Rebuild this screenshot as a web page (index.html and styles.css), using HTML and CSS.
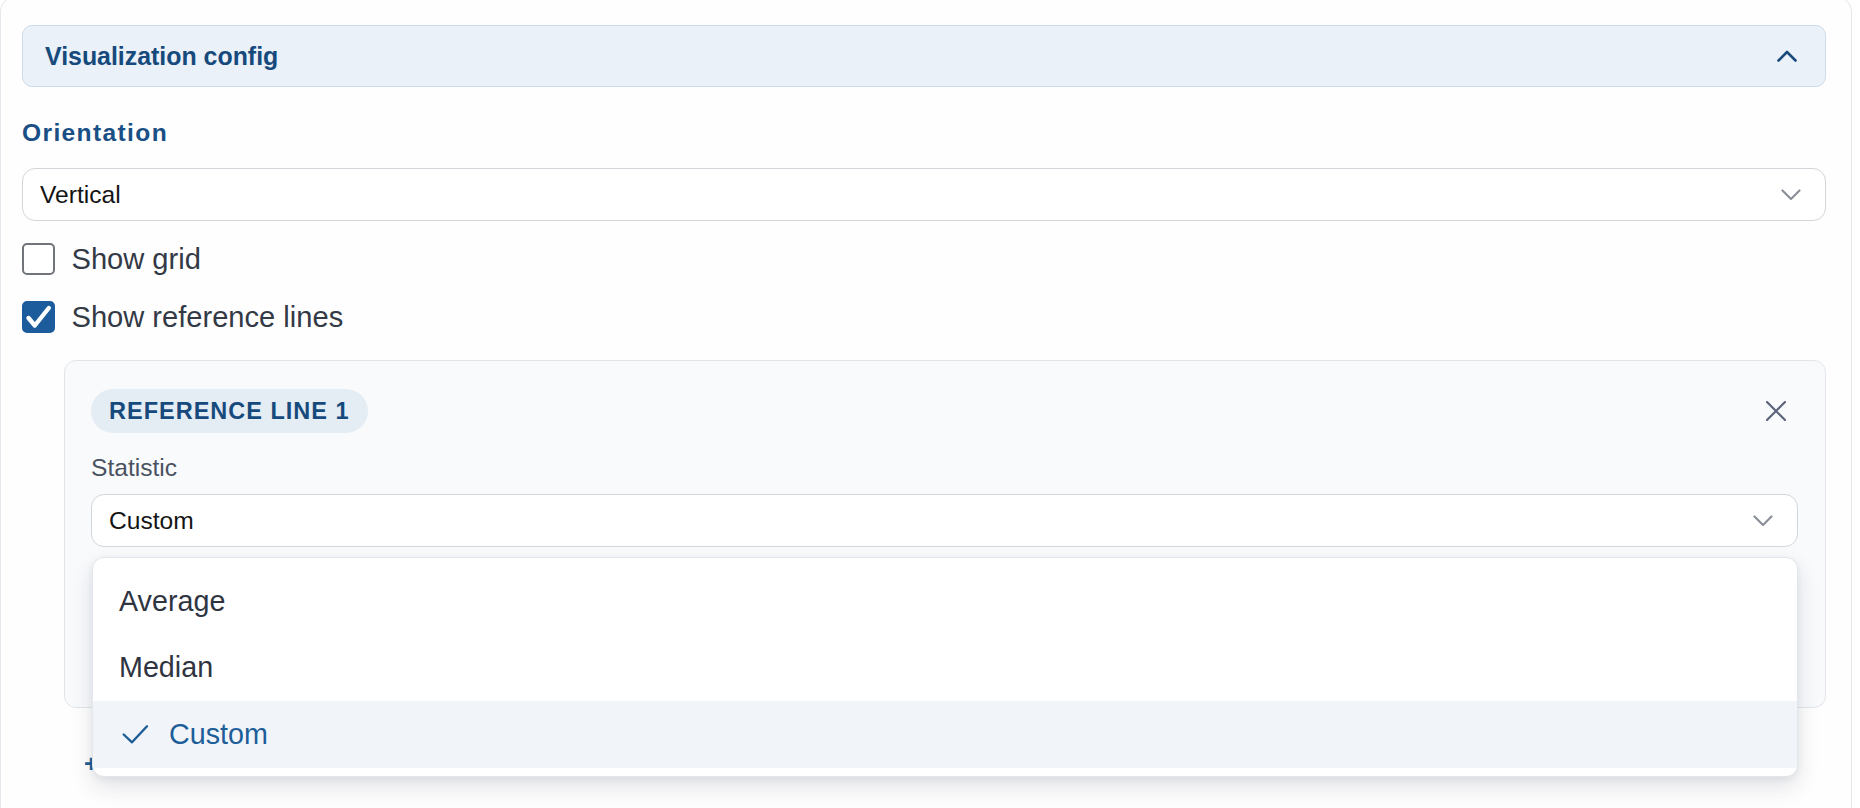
FILE: index.html
```html
<!DOCTYPE html>
<html lang="en">
<head>
<meta charset="utf-8">
<title>Visualization config</title>
<link rel="stylesheet" href="styles.css">
</head>
<body>
<div class="panel">
  <div class="acc-header">
    <span class="acc-title">Visualization config</span>
    <svg class="chev-up" width="20" height="12" viewBox="0 0 20 12"><polyline points="1.5,10.5 10,2 18.5,10.5" fill="none" stroke="#1b4a7c" stroke-width="2.6" stroke-linecap="round" stroke-linejoin="round"/></svg>
  </div>
  <div class="acc-body">
    <div class="section-label">Orientation</div>
    <div class="select">
      <span class="select-value">Vertical</span>
      <svg class="chev-down" width="20" height="12" viewBox="0 0 20 12"><polyline points="1.5,1.5 10,10 18.5,1.5" fill="none" stroke="#8b9098" stroke-width="2.2" stroke-linecap="round" stroke-linejoin="round"/></svg>
    </div>
    <div class="checks">
      <label class="check"><span class="box"></span><span class="check-text">Show grid</span></label>
      <label class="check"><span class="box checked"><svg width="32" height="32" viewBox="0 0 32 32"><polyline points="6.5,17 12.8,24.5 26.8,7" fill="none" stroke="#fff" stroke-width="4.4" stroke-linecap="round" stroke-linejoin="round"/></svg></span><span class="check-text">Show reference lines</span></label>
    </div>
    <div class="ref-card">
      <div class="ref-head">
        <span class="badge">REFERENCE LINE 1</span>
        <span class="close-btn"><svg width="20" height="20" viewBox="0 0 20 20"><path d="M1 1 L19 19 M19 1 L1 19" fill="none" stroke="#5b6478" stroke-width="2.2" stroke-linecap="round"/></svg></span>
      </div>
      <div class="field-label">Statistic</div>
      <div class="select-wrap">
        <div class="select select-sm">
          <span class="select-value">Custom</span>
          <svg class="chev-down" width="20" height="12" viewBox="0 0 20 12"><polyline points="1.5,1.5 10,10 18.5,1.5" fill="none" stroke="#8b9098" stroke-width="2.2" stroke-linecap="round" stroke-linejoin="round"/></svg>
        </div>
        <ul class="menu">
          <li class="menu-item">Average</li>
          <li class="menu-item">Median</li>
          <li class="menu-item selected"><svg class="tick" width="36" height="24" viewBox="0 0 36 24"><polyline points="4.7,12.5 13,20.3 28,4.3" fill="none" stroke="#1d5e99" stroke-width="2.4" stroke-linecap="round" stroke-linejoin="round"/></svg><span>Custom</span></li>
        </ul>
      </div>
    </div>
    <div class="add-link">+ Add reference line</div>
  </div>
</div>
</body>
</html>
```
FILE: styles.css
```css
* { box-sizing: border-box; }
html, body { margin: 0; padding: 0; background: #ffffff; overflow: hidden; }
body { font-family: "Liberation Sans", Arial, Helvetica, sans-serif; color: #2f3542; }

.panel {
  margin-top: -3px;
  width: 1852px;
  height: 840px;
  border: 1px solid #e4e7eb;
  border-radius: 14px;
  background: #fefefe;
  padding: 27px 25px 0 21px;
}

.acc-header {
  height: 62px;
  background: #eaf1f8;
  border: 1.5px solid #cfdce8;
  border-radius: 10px;
  display: flex;
  align-items: center;
  justify-content: space-between;
  padding: 0 28px 0 22px;
}
.acc-title {
  font-size: 24.9px;
  font-weight: 700;
  color: #174a7c;
}

.acc-body { display: flex; flex-direction: column; }

.section-label {
  margin-top: 31px;
  font-size: 24.6px;
  line-height: 30px;
  font-weight: 700;
  letter-spacing: 1.35px;
  color: #1a4f86;
}

.select {
  margin-top: 20px;
  height: 53px;
  border: 1.5px solid #d2d5da;
  border-radius: 13px;
  background: #ffffff;
  display: flex;
  align-items: center;
  justify-content: space-between;
  padding: 0 24px 0 17px;
}
.select-value { font-size: 24.6px; color: #141414; }

.checks { display: flex; flex-direction: column; gap: 22px; margin-top: 20px; }
.check { display: flex; align-items: center; gap: 17px; height: 36px; }
.box {
  width: 32.5px; height: 32.5px;
  border: 2px solid #717478;
  border-radius: 5px;
  background: #fff;
  display: flex; align-items: center; justify-content: center;
  flex: none;
}
.box.checked { background: #1c5b9c; border-color: #1c5b9c; }
.box.checked svg { flex: none; }
.check-text { font-size: 29.1px; line-height: 36px; color: #333a46; }

.ref-card {
  margin: 25px 0 0 42px;
  border: 1px solid #e2e6eb;
  border-radius: 12px;
  background: #f8fafc;
  padding: 28px 27px 159.5px 26px;
}
.ref-head { display: flex; align-items: center; justify-content: space-between; height: 44px; }
.badge {
  height: 43.5px;
  display: inline-flex; align-items: center;
  padding: 0 18px;
  border-radius: 22px;
  background: #e4ecf4;
  color: #174a7c;
  font-size: 23.5px;
  font-weight: 700;
  letter-spacing: 1px;
}
.close-btn { width: 44px; height: 44px; display: flex; align-items: center; justify-content: center; }

.field-label {
  margin-top: 20px;
  font-size: 24.6px;
  line-height: 30px;
  color: #4a5261;
}

.select-wrap { position: relative; margin-top: 11px; }
.select-wrap .select { margin-top: 0; }

.menu {
  position: absolute;
  left: 1px; right: 0;
  top: 63px;
  margin: 0;
  padding: 10px 0 8px;
  list-style: none;
  background: #ffffff;
  border: 1px solid #e3e6ea;
  border-radius: 12px;
  box-shadow: 0 10px 22px rgba(30, 40, 60, 0.13), 0 2px 6px rgba(30, 40, 60, 0.06);
  z-index: 5;
  overflow: hidden;
}
.menu-item {
  height: 66.5px;
  display: flex; align-items: center;
  padding-left: 26px;
  font-size: 28.7px;
  color: #2f3441;
}
.menu-item.selected { background: #f1f5f9; color: #1d5e99; }
.tick { flex: none; margin-right: 14px; }

.add-link {
  margin: 42px 0 0 62px;
  font-size: 24.5px;
  font-weight: 700;
  color: #1d5e99;
}
```
